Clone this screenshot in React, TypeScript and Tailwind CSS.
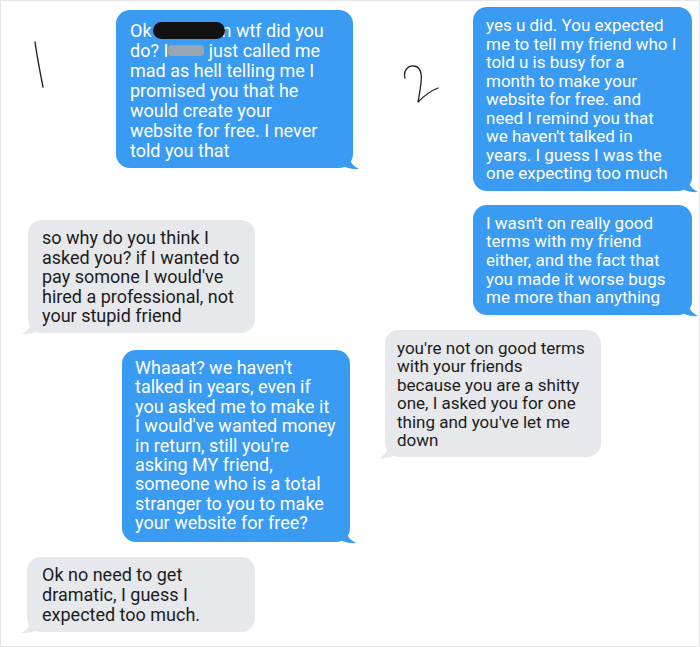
import React from 'react';

type Side = 'sent' | 'received';

interface BubbleProps {
  side: Side;
  lines: React.ReactNode[];
  className: string;
}

const Tail: React.FC<{ side: Side }> = ({ side }) =>
  side === 'sent' ? (
    <svg className="absolute -right-[6px] bottom-[-2px] h-[14px] w-[14px]" viewBox="0 0 14 14">
      <path d="M4 0 C5 6 8 10 14 13 C9 13.5 4 12.5 0 11 Z" fill="#399bf1" />
    </svg>
  ) : (
    <svg className="absolute -left-[6px] bottom-[-2px] h-[14px] w-[14px]" viewBox="0 0 14 14">
      <path d="M10 0 C9 6 6 10 0 13 C5 13.5 10 12.5 14 11 Z" fill="#e6e8eb" />
    </svg>
  );

const Bubble: React.FC<BubbleProps> = ({ side, lines, className }) => (
  <div
    className={`relative shrink-0 whitespace-nowrap rounded-[14px] ${
      side === 'sent' ? 'bg-[#399bf1] text-white' : 'bg-[#e6e8eb] text-[#1c1c1c]'
    } ${className}`}
  >
    {lines.map((l, i) => (
      <div key={i}>{l}</div>
    ))}
    <Tail side={side} />
  </div>
);

export default function App() {
  return (
    <div
      className="flex h-[647px] w-[700px] border border-[#e6e6e6] bg-white"
      style={{ fontFamily: 'Roboto, "Noto Sans", sans-serif' }}
    >
      {/* left screenshot */}
      <div className="-ml-px -mt-px flex w-[370px] flex-col pt-[10px] text-[18px]">
        <div className="flex">
          <svg className="h-[158px] w-[116px] shrink-0" viewBox="0 0 116 158">
            <path d="M35 32 C37 46 40 62 43 77" stroke="#222" strokeWidth="1.4" fill="none" strokeLinecap="round" />
          </svg>
          <Bubble
            side="sent"
            className="h-[158px] w-[237px] pl-[14px] pt-[10px] leading-[20px]"
            lines={[
              <>
                Ok<span className="mx-[1px] inline-block h-[17px] w-[72px] translate-y-[2px] rounded-full bg-[#111]" />
                <span className="-ml-[4px]">n wtf did you</span>
              </>,
              <>
                do? I<span className="inline-block h-[11px] w-[36px] translate-y-[-1px] rounded-[4px] bg-[#9aa5b1]" /> just called me
              </>,
              'mad as hell telling me I',
              'promised you that he',
              'would create your',
              'website for free. I never',
              'told you that',
            ]}
          />
        </div>
        <Bubble
          side="received"
          className="ml-[28px] mt-[52px] h-[113px] w-[227px] pl-[14px] pt-[8px] leading-[19.5px]"
          lines={[
            'so why do you think I',
            'asked you? if I wanted to',
            "pay somone I would've",
            'hired a professional, not',
            'your stupid friend',
          ]}
        />
        <Bubble
          side="sent"
          className="ml-[122px] mt-[17px] h-[192px] w-[228px] pl-[13px] pt-[8px] leading-[19.4px]"
          lines={[
            "Whaaat? we haven't",
            'talked in years, even if',
            'you asked me to make it',
            "I would've wanted money",
            "in return, still you're",
            'asking MY friend,',
            'someone who is a total',
            'stranger to you to make',
            'your website for free?',
          ]}
        />
        <Bubble
          side="received"
          className="ml-[27px] mt-[15px] h-[75px] w-[228px] pl-[15px] pt-[8px] leading-[20px]"
          lines={['Ok no need to get', 'dramatic, I guess I', 'expected too much.']}
        />
      </div>

      {/* right screenshot */}
      <div className="-mt-px flex flex-1 flex-col pt-[7px] text-[17px]">
        <div className="flex">
          <svg className="h-[184px] w-[103px] shrink-0" viewBox="0 0 103 184">
            <path
              d="M35 71 C33 64 38 58 44 59 C51 60 52 68 51 76 C50 84 49 90 48 95 C54 89 60 84 68 81"
              stroke="#222"
              strokeWidth="1.3"
              fill="none"
              strokeLinecap="round"
              strokeLinejoin="round"
            />
          </svg>
          <Bubble
            side="sent"
            className="h-[184px] w-[219px] pl-[13px] pt-[9px] leading-[18.5px]"
            lines={[
              'yes u did. You expected',
              'me to tell my friend who I',
              'told u is busy for a',
              'month to make your',
              'website for free. and',
              'need I remind you that',
              "we haven't talked in",
              'years. I guess I was the',
              'one expecting too much',
            ]}
          />
        </div>
        <Bubble
          side="sent"
          className="ml-[103px] mt-[14px] h-[110px] w-[219px] pl-[13px] pt-[8.5px] leading-[18.7px]"
          lines={[
            "I wasn't on really good",
            'terms with my friend',
            'either, and the fact that',
            'you made it worse bugs',
            'me more than anything',
          ]}
        />
        <Bubble
          side="received"
          className="ml-[15px] mt-[15px] h-[127px] w-[216px] pl-[12px] pt-[8.5px] leading-[18.5px]"
          lines={[
            "you're not on good terms",
            'with your friends',
            'because you are a shitty',
            'one, I asked you for one',
            "thing and you've let me",
            'down',
          ]}
        />
      </div>
    </div>
  );
}
